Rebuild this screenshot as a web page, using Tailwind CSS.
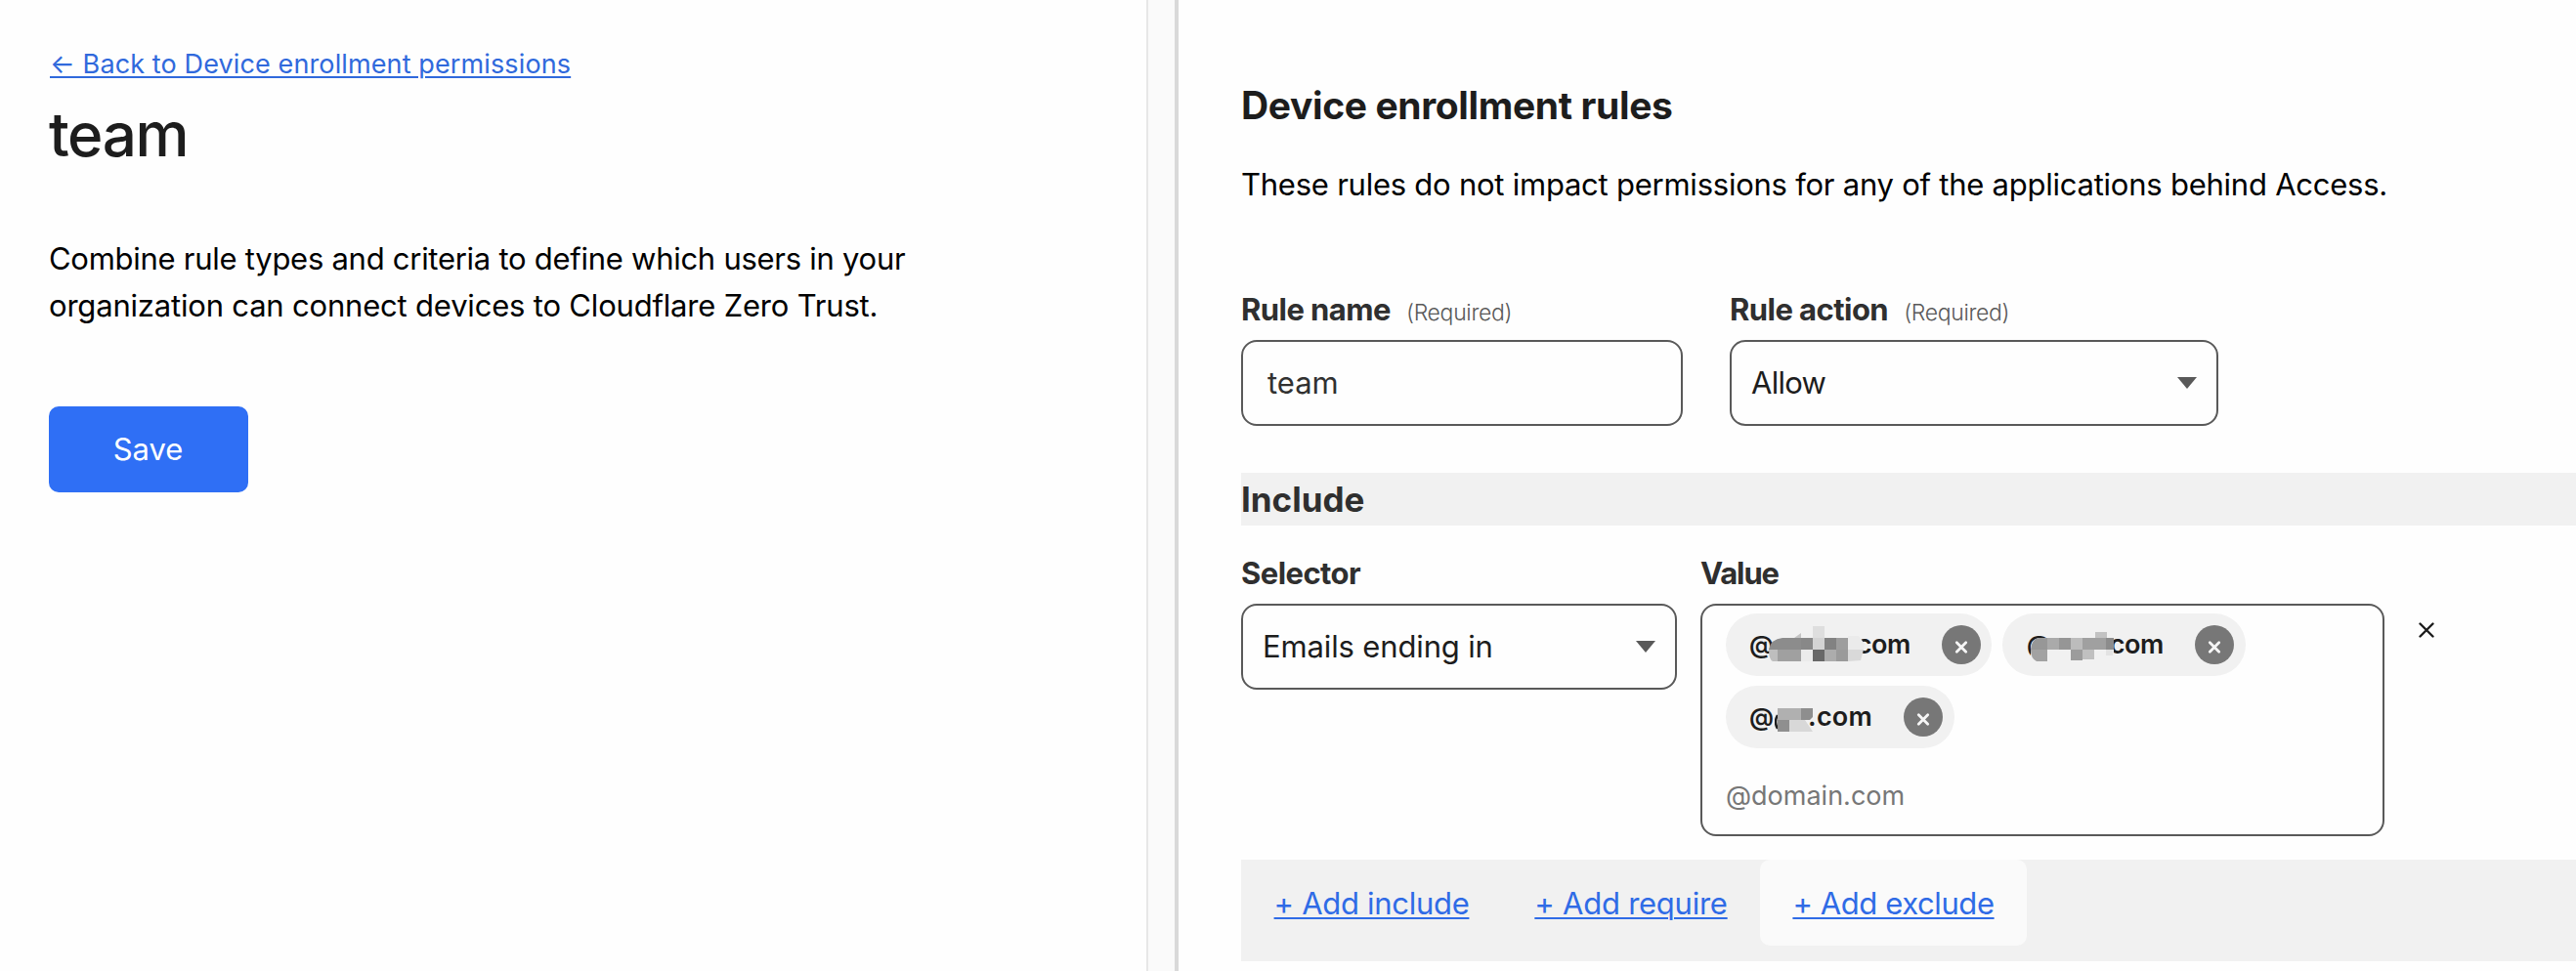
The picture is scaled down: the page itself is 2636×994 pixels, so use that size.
<!DOCTYPE html>
<html lang="en">
<head>
<meta charset="utf-8">
<title>Device enrollment rules</title>
<script src="https://cdn.jsdelivr.net/npm/@tailwindcss/browser@4"></script>
</head>
<body class="bg-[#fefefe] font-['Inter',sans-serif] text-black">
<div class="flex h-[994px] w-[2636px] overflow-hidden">

  <aside class="w-[1173px] shrink-0 pl-[50px] pt-12">
    <a href="#" class="ml-px block w-fit whitespace-nowrap text-[27px] leading-[36px] tracking-[0.12px] text-[#3069dc] underline decoration-2 underline-offset-[3px]">← Back to Device enrollment permissions</a>
    <h1 class="mt-4 text-[62px] font-medium leading-[76px] tracking-[-1.4px] text-[#1d1d1d]">team</h1>
    <p class="mt-[65px] whitespace-nowrap text-[31px] leading-[48px]"><span class="tracking-[-0.27px]">Combine rule types and criteria to define which users in your</span><br><span class="tracking-[-0.19px]">organization can connect devices to Cloudflare Zero Trust.</span></p>
    <button class="mt-[79px] h-[88px] w-[204px] rounded-[10px] bg-[#2f6ff5] pr-px pt-px text-[31px] text-white">Save</button>
  </aside>

  <div class="w-[33px] shrink-0 border-l-2 border-r-4 border-l-[#e7e7e7] border-r-[#d9d9d9] bg-[#fafafa]"></div>

  <main class="flex-1 pl-16 pt-[84px]">
    <h2 class="text-[39px] font-bold leading-[48px] tracking-[-0.37px] text-[#1d1d1d]">Device enrollment rules</h2>
    <p class="mt-[33px] whitespace-nowrap text-[31px] leading-[48px] tracking-[-0.24px]">These rules do not impact permissions for any of the applications behind Access.</p>

    <div class="mt-[84px] flex gap-12 text-[31px]">
      <div class="w-[452px]">
        <div class="flex h-10 items-baseline gap-4 leading-[40px]"><span class="font-bold tracking-[-0.55px] text-[#2f2f2f]">Rule name</span><span class="text-[23px] font-light tracking-[-0.33px] text-[#595959]">(Required)</span></div>
        <div class="mt-[11px] flex h-[88px] items-center rounded-2xl border-2 border-[#595959] pl-[25px] pt-px text-[#313131]">team</div>
      </div>
      <div class="w-[500px]">
        <div class="flex h-10 items-baseline gap-4 leading-[40px]"><span class="font-bold tracking-[-0.55px] text-[#2f2f2f]">Rule action</span><span class="text-[23px] font-light tracking-[-0.33px] text-[#595959]">(Required)</span></div>
        <div class="mt-[11px] flex h-[88px] items-center justify-between rounded-2xl border-2 border-[#595959] px-5 tracking-[-0.73px] text-[#1d1d1d]"><span class="pt-px">Allow</span><svg class="h-3 w-5" viewBox="0 0 20 12"><path d="M0 0H20L10 12Z" fill="#595959"/></svg></div>
      </div>
    </div>

    <h3 class="mt-12 h-[54px] bg-[#f1f1f1] text-[35px] font-bold leading-[54px] text-[#2f2f2f]">Include</h3>

    <div class="mt-[29px] flex text-[31px]">
      <div class="w-[446px]">
        <div class="font-bold leading-[40px] tracking-[-0.56px] text-[#2f2f2f]">Selector</div>
        <div class="mt-[11px] flex h-[88px] items-center justify-between rounded-2xl border-2 border-[#595959] px-5 tracking-[-0.14px] text-[#1d1d1d]"><span class="pt-px">Emails ending in</span><svg class="h-3 w-5" viewBox="0 0 20 12"><path d="M0 0H20L10 12Z" fill="#595959"/></svg></div>
      </div>
      <div class="ml-6 w-[700px]">
        <div class="font-bold leading-[40px] tracking-[-1.1px] text-[#2f2f2f]">Value</div>
        <div class="mt-[11px] h-[238px] rounded-2xl border-2 border-[#595959] pl-6 pt-2">
          <div class="flex w-[560px] flex-wrap gap-[10px] text-[27px] font-semibold leading-[64px] text-[#1d1d1d]">
            <div class="relative flex h-16 w-[272px] items-center justify-between rounded-full bg-[#f1f1f1] pl-6 pr-[11px]">
              <div class="flex w-[165px] justify-between"><span class="text-[25px]">@</span><span class="tracking-[-0.4px]">com</span></div>
              <svg class="absolute left-[44px] top-[10px] h-10 w-[100px]" viewBox="0 0 100 40">
                <path d="M0 27Q2 16 14 15H34V27Z" fill="#8c8c8c"/><path d="M26 15L33 10V15Z" fill="#c4c4c4"/>
                <path d="M33 15h12v12H33z" fill="#888888"/><path d="M45 3h12v12H45z" fill="#dedede"/><path d="M45 15h12v12H45z" fill="#d3d3d3"/><path d="M57 15h12v12H57z" fill="#828282"/><path d="M69 15h12v12H69z" fill="#9d9d9d"/>
                <path d="M81 13H92L98 21L97 27H81Z" fill="#ebebeb"/>
                <path d="M0 27H9V39H4Q0 37 0 27Z" fill="#bebebe"/><path d="M9 27h24v12H9z" fill="#a0a0a0"/><path d="M33 27h12v12H33z" fill="#ebebeb"/><path d="M45 27h12v12H45z" fill="#686868"/><path d="M57 27h12v12H57z" fill="#acacac"/><path d="M69 27h12v12H69z" fill="#9a9a9a"/><path d="M81 27H97L94 38L81 39Z" fill="#d9d9d9"/>
              </svg>
              <svg class="size-10" viewBox="0 0 40 40"><circle cx="20" cy="20" r="20" fill="#777777"/><path d="M15.3 17.8L24.7 27.2M24.7 17.8L15.3 27.2" stroke="#f6f6f6" stroke-width="2.8" stroke-linecap="round"/></svg>
            </div>
            <div class="relative ml-px flex h-16 w-[249px] items-center justify-between rounded-full bg-[#f1f1f1] pl-[25px] pr-3">
              <div class="flex w-[140px] justify-between"><span class="text-[25px]">@</span><span class="tracking-[-0.4px]">com</span></div>
              <svg class="absolute left-[28px] top-[16px] h-10 w-[86px]" viewBox="0 0 86 40">
                <path d="M1 21Q1 9 12 9H80L86 12V24H76V30H60V33H1Z" fill="#f1f1f1"/>
                <path d="M1 21Q2 9 10 9H18V21Z" fill="#979797"/><path d="M18 9h12v12H18z" fill="#aaaaaa"/><path d="M30 9h12v12H30z" fill="#969696"/><path d="M42 9h12v12H42z" fill="#bcbcbc"/><path d="M54 9h24v12H54z" fill="#a0a0a0"/><path d="M67 3h12v6H67z" fill="#c2c2c2"/><path d="M78 9h8v12h-8z" fill="#8c8c8c"/>
                <path d="M1 21H18V33H7Q1 30 1 21Z" fill="#a2a2a2"/><path d="M42 21h12v11H42z" fill="#9c9c9c"/><path d="M54 21h12v10H54z" fill="#c0c0c0"/><path d="M78 21h7v6h-7z" fill="#e3e3e3"/>
              </svg>
              <svg class="size-10" viewBox="0 0 40 40"><circle cx="20" cy="20" r="20" fill="#777777"/><path d="M15.3 17.8L24.7 27.2M24.7 17.8L15.3 27.2" stroke="#f6f6f6" stroke-width="2.8" stroke-linecap="round"/></svg>
            </div>
            <div class="relative flex h-16 w-[234px] items-center justify-between rounded-full bg-[#f1f1f1] pl-6 pr-3">
              <div class="flex w-[126px] justify-between"><span class="text-[25px]">@</span><span class="tracking-[0.2px]">.com</span></div>
              <svg class="absolute left-[50px] top-[16px] h-10 w-[42px]" viewBox="0 0 42 40">
                <path d="M3 14Q-1 21 3 28" fill="none" stroke="#1d1d1d" stroke-width="2.5"/>
                <path d="M3 7h24v12H3z" fill="#b0b0b0"/><path d="M27 7H39V16L36 19H27Z" fill="#8e8e8e"/><path d="M3 19h12v12H3z" fill="#8f8f8f"/><path d="M15 19H31L39 31H15Z" fill="#d8d8d8"/>
              </svg>
              <svg class="size-10" viewBox="0 0 40 40"><circle cx="20" cy="20" r="20" fill="#777777"/><path d="M15.3 17.8L24.7 27.2M24.7 17.8L15.3 27.2" stroke="#f6f6f6" stroke-width="2.8" stroke-linecap="round"/></svg>
            </div>
          </div>
          <div class="mt-[31px] text-[27px] leading-[36px] text-[#777777]">@domain.com</div>
        </div>
      </div>
      <svg class="ml-[35px] mt-[70px] size-4" viewBox="0 0 16 16"><path d="M1.5 1.5L14.5 14.5M14.5 1.5L1.5 14.5" stroke="#1d1d1d" stroke-width="2.4" stroke-linecap="round"/></svg>
    </div>

    <div class="mt-6 flex h-[104px] items-start bg-[#f1f1f1] text-[31px] leading-[89px] text-[#2f6be6]">
      <a href="#" class="h-[88px] w-[267px] text-center tracking-[-0.3px] underline decoration-2 underline-offset-[3px]">+ Add include</a>
      <a href="#" class="h-[88px] w-[264px] text-center tracking-[-0.25px] underline decoration-2 underline-offset-[3px]">+ Add require</a>
      <a href="#" class="h-[88px] w-[273px] rounded-[10px] bg-[#fafafa] text-center tracking-[-0.41px] underline decoration-2 underline-offset-[3px]">+ Add exclude</a>
    </div>
  </main>
</div>
</body>
</html>
